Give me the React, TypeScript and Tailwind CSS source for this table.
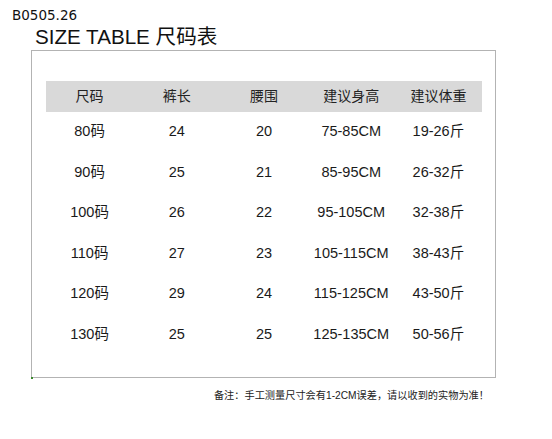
import React from "react";

const cjk = "font-['Liberation_Sans','Noto_Sans_CJK_SC',sans-serif]";

const headers = ["尺码", "裤长", "腰围", "建议身高", "建议体重"];

const rows = [
  ["80码", "24", "20", "75-85CM", "19-26斤"],
  ["90码", "25", "21", "85-95CM", "26-32斤"],
  ["100码", "26", "22", "95-105CM", "32-38斤"],
  ["110码", "27", "23", "105-115CM", "38-43斤"],
  ["120码", "29", "24", "115-125CM", "43-50斤"],
  ["130码", "25", "25", "125-135CM", "50-56斤"],
];

const App = () => {
  return (
    <div className={`w-[552px] h-[439px] bg-white text-[#1a1a1a] ${cjk}`}>
      <div className="pl-[12px] pt-[7px] h-[27px] text-[13.5px] leading-[16px] font-['DejaVu_Sans',sans-serif] text-[#111]">
        B0505.26
      </div>
      <div className="pl-[35px] h-[20px] text-[20.6px] leading-[20px] text-[#111]">
        SIZE TABLE 尺码表
      </div>

      <div className="relative ml-[31px] mt-[3px] w-[465px] h-[328px] border border-[#b3b3b3] pt-[30px] pl-[14px]">
        <div className="w-[436px] h-[31px] bg-[#d9d9d9] grid grid-cols-5 items-center text-[14px] text-[#222]">
          {headers.map((h) => (
            <div key={h} className="text-center">
              {h}
            </div>
          ))}
        </div>
        {rows.map((r) => (
          <div
            key={r[0]}
            className="w-[436px] h-[40.5px] grid grid-cols-5 items-center text-[14.5px] text-[#1a1a1a]"
          >
            {r.map((c, i) => (
              <div key={i} className="text-center">
                {c}
              </div>
            ))}
          </div>
        ))}
        <div className="absolute left-[-1px] bottom-[-2px] w-[2px] h-[2px] bg-[#3c8a2e]" />
      </div>

      <div className="w-[489px] mt-[12px] text-right text-[10.2px] leading-[12px] text-[#222]">
        备注：手工测量尺寸会有1-2CM误差，请以收到的实物为准！
      </div>
    </div>
  );
};

export default App;
